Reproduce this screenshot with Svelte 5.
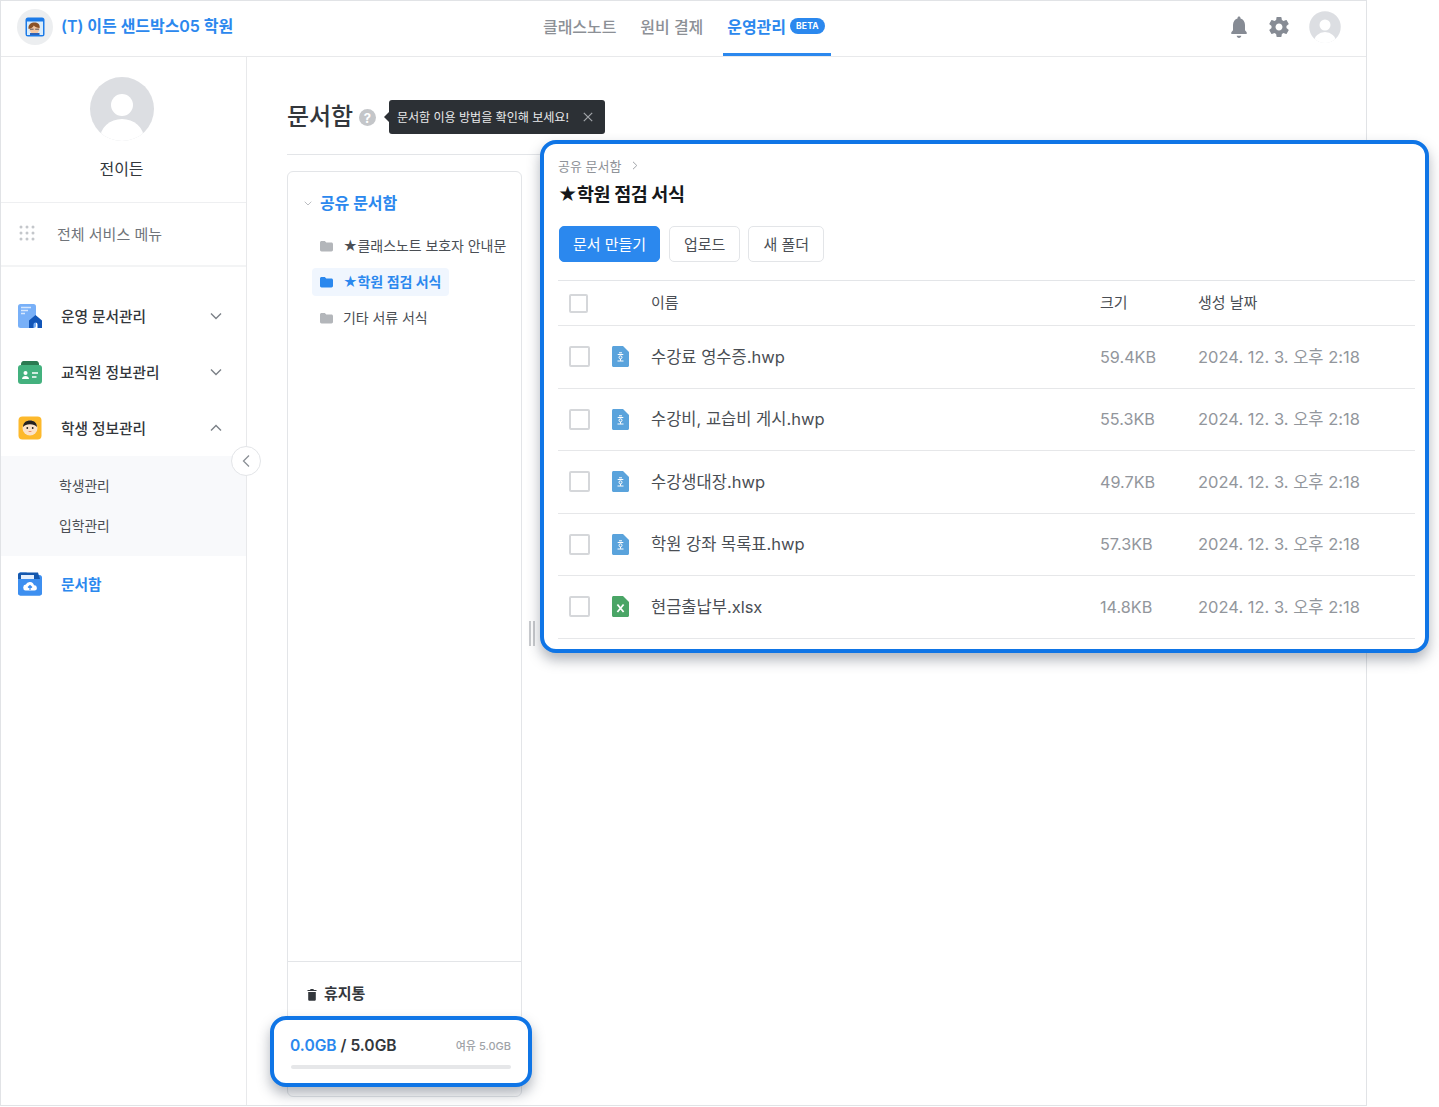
<script>
  const files = [
    { name: '수강료 영수증.hwp', size: '59.4KB', kind: 'hwp' },
    { name: '수강비, 교습비 게시.hwp', size: '55.3KB', kind: 'hwp' },
    { name: '수강생대장.hwp', size: '49.7KB', kind: 'hwp' },
    { name: '학원 강좌 목록표.hwp', size: '57.3KB', kind: 'hwp' },
    { name: '현금출납부.xlsx', size: '14.8KB', kind: 'xls' }
  ];
  const folders = [
    { name: '★클래스노트 보호자 안내문', on: false },
    { name: '★학원 점검 서식', on: true },
    { name: '기타 서류 서식', on: false }
  ];
  const folderPath = 'M1 2.6C1 1.7 1.7 1 2.6 1h3.2l1.5 1.6h5.1c.9 0 1.6.7 1.6 1.6v5.6c0 .9-.7 1.6-1.6 1.6H2.6C1.7 11.4 1 10.7 1 9.8z';
</script>

<div class="frame">
  <header class="top">
    <div class="brand">
      <span class="logo">
        <svg viewBox="0 0 20 20" width="20" height="20">
          <rect x="0.5" y="0.5" width="19" height="19" rx="2.500" fill="#1b7ae8"/>
          <rect x="2" y="4.500" width="16" height="13.500" fill="#d9ecfb"/>
          <circle cx="9.500" cy="11.500" r="5.200" fill="#f3c7a3"/>
          <path d="M3.600 12c-.8-4.500 2.800-6.400 5.800-6.400 3.200 0 5.800 1.800 5.200 5.400-2.400-.2-4.800-.8-5.800-2.400-.6 1.600-2.800 3-5.200 3.400z" fill="#8a5228"/>
          <path d="M5 12.200h3.600M10.200 12.200h3.800" stroke="#4a4a52" stroke-width=".9"/>
          <rect x="5" y="16" width="9.500" height="2" fill="#2e62b8"/>
        </svg>
      </span>
      <span class="brand-name">(T) 이든 샌드박스05 학원</span>
    </div>
    <nav class="nav">
      <a>클래스노트</a>
      <a>원비 결제</a>
      <a class="on">운영관리<b>BETA</b></a>
    </nav>
    <div class="tools">
      <svg class="bell" viewBox="0 0 24 24" width="24" height="24"><path fill="#868b94" d="M12 23c1.3 0 2.3-1 2.3-2.2H9.700C9.700 22 10.700 23 12 23zm7.700-5.800-1.700-2V10c0-3.300-1.900-5.800-4.500-6.500V3c0-.9-.7-1.600-1.500-1.600S10.500 2.100 10.500 3v.5C7.900 4.200 6 6.700 6 10v5.200l-1.700 2V19h15.400z"/></svg>
      <svg class="gear" viewBox="0 0 24 24" width="24" height="24"><path fill="#868b94" d="M19.430 12.980c.04-.32.07-.64.07-.98s-.03-.66-.07-.98l2.110-1.650c.19-.15.24-.42.12-.64l-2-3.460c-.12-.22-.39-.3-.61-.22l-2.490 1c-.52-.4-1.080-.73-1.690-.98l-.38-2.650A.488.488 0 0 0 14 2h-4c-.25 0-.46.18-.49.420l-.38 2.650c-.61.25-1.170.59-1.690.98l-2.490-1c-.23-.09-.49 0-.61.22l-2 3.460c-.13.22-.07.490.12.640l2.110 1.650c-.04.32-.07.650-.07.980s.03.660.07.980l-2.110 1.650c-.19.150-.24.420-.12.640l2 3.460c.12.220.39.300.61.220l2.490-1c.52.400 1.080.730 1.690.980l.38 2.650c.03.240.24.420.49.420h4c.25 0 .46-.18.49-.42l.38-2.650c.61-.25 1.170-.59 1.690-.98l2.490 1c.23.090.49 0 .61-.22l2-3.460c.12-.22.07-.49-.12-.64zM12 15.500c-1.930 0-3.500-1.570-3.500-3.500s1.570-3.500 3.500-3.500 3.500 1.570 3.500 3.500-1.570 3.500-3.500 3.500z"/></svg>
      <svg class="me" viewBox="0 0 64 64" width="32" height="32"><defs><clipPath id="ca"><circle cx="32" cy="32" r="32"/></clipPath></defs><circle cx="32" cy="32" r="31.500" fill="#dcdee2"/><g clip-path="url(#ca)"><circle cx="32" cy="28" r="11" fill="#fff"/><ellipse cx="32" cy="62" rx="22" ry="20" fill="#fff"/></g></svg>
    </div>
  </header>

  <div class="body">
    <aside class="side">
      <div class="profile">
        <svg viewBox="0 0 64 64" width="64" height="64"><defs><clipPath id="cb"><circle cx="32" cy="32" r="32"/></clipPath></defs><circle cx="32" cy="32" r="32" fill="#dcdee2"/><g clip-path="url(#cb)"><circle cx="32" cy="28" r="11" fill="#fff"/><ellipse cx="32" cy="62" rx="22" ry="20" fill="#fff"/></g></svg>
        <span>전이든</span>
      </div>
      <div class="all">
        <svg viewBox="0 0 16 16" width="16" height="16" fill="#c4c7cb">
          {#each [2, 8, 14] as y}{#each [2, 8, 14] as x}<circle cx={x} cy={y} r="1.500"/>{/each}{/each}
        </svg>
        <span>전체 서비스 메뉴</span>
      </div>
      <ul class="menu">
        <li class="item">
          <svg viewBox="0 0 24 24" width="24" height="24"><rect x="0" y="0" width="18" height="24" rx="2.500" fill="#78b0f8"/><path d="M3 3.500h10M3 6.500h7M3 9.500h4" stroke="#d6e7fd" stroke-width="1.400"/><path d="M11 24v-7.500L17.500 11l6.500 5.500V24h-4.500v-3.500a2 2 0 0 0-4 0V24z" fill="#1256b8"/></svg>
          <span>운영 문서관리</span>
          <svg class="chev" viewBox="0 0 12 8" width="12" height="8"><path d="M1 1.500l5 5 5-5" fill="none" stroke="#7b8087" stroke-width="1.400"/></svg>
        </li>
        <li class="item">
          <svg viewBox="0 0 24 24" width="24" height="24"><path d="M3 4c0-1.500 1-3 2.500-3h13C20 1 21 2.500 21 4v4H3z" fill="#2b7a51"/><rect y="5" width="24" height="19" rx="3" fill="#43b17e"/><circle cx="7.500" cy="13" r="2" fill="#fff"/><path d="M4 19c0-4 7-4 7 0z" fill="#fff"/><path d="M14 13h6M14 17h4.500" stroke="#fff" stroke-width="1.500"/></svg>
          <span>교직원 정보관리</span>
          <svg class="chev" viewBox="0 0 12 8" width="12" height="8"><path d="M1 1.500l5 5 5-5" fill="none" stroke="#7b8087" stroke-width="1.400"/></svg>
        </li>
        <li class="item">
          <svg viewBox="0 0 24 24" width="24" height="24"><rect x="0.500" y="0.500" width="23" height="23" rx="4" fill="#fdb92c"/><circle cx="12" cy="12" r="7.500" fill="#fbe3cb"/><path d="M5 11C5 6.500 8.500 4.500 12 4.500s7 2 7 6.500c-2-1.800-3.500-2.800-7-2.800s-5 1-7 2.800z" fill="#25211f"/><circle cx="9.300" cy="12" r=".9" fill="#25211f"/><circle cx="14.700" cy="12" r=".9" fill="#25211f"/><path d="M10 15q2 1.600 4 0z" fill="#e2583e"/></svg>
          <span>학생 정보관리</span>
          <svg class="chev" viewBox="0 0 12 8" width="12" height="8"><path d="M1 6.500l5-5 5 5" fill="none" stroke="#7b8087" stroke-width="1.400"/></svg>
        </li>
        <li class="sub">
          <span>학생관리</span>
          <span>입학관리</span>
        </li>
        <li class="item active">
          <svg viewBox="0 0 24 24" width="24" height="24"><path d="M0 3C0 1.500 1 .5 2.500 .5h6L11 3h10.500C23 3 24 4 24 5.500V21c0 1.500-1 2.500-2.500 2.500h-19C1 23.500 0 22.500 0 21z" fill="#3d8ff0"/><path d="M0 3C0 1.500 1 .5 2.500 .5H20L22 7H0z" fill="#1558ae"/><rect x="3" y="3" width="13" height="4.500" fill="#e4effd"/><path d="M0 7h24v14c0 1.500-1 2.500-2.500 2.500h-19C1 23.500 0 22.500 0 21z" fill="#3d8ff0"/><path d="M7.500 18.500a3 3 0 0 1 .3-5.900 4.300 4.300 0 0 1 8.200.700 2.600 2.600 0 0 1 .5 5.200z" fill="#fff"/><path d="M12 18v-4M10 15.500l2-2 2 2" stroke="#3d8ff0" stroke-width="1.200" fill="none"/></svg>
          <span>문서함</span>
        </li>
      </ul>
      <button class="collapse" aria-label="접기">
        <svg viewBox="0 0 8 14" width="8" height="14"><path d="M7 1.500L1.500 7 7 12.500" fill="none" stroke="#8b9096" stroke-width="1.300"/></svg>
      </button>
    </aside>

    <main class="main">
      <div class="heading">
        <h1>문서함</h1>
        <span class="help">?</span>
        <div class="tip">
          <span>문서함 이용 방법을 확인해 보세요!</span>
          <svg viewBox="0 0 10 10" width="10" height="10"><path d="M.8.800l8.400 8.400M9.200.800L.8 9.200" stroke="#a3a6aa" stroke-width="1.200"/></svg>
        </div>
      </div>

      <div class="tree-panel">
        <div class="tree">
          <div class="root">
            <svg viewBox="0 0 8 5" width="8" height="5"><path d="M.7.700L4 4l3.300-3.300" fill="none" stroke="#b4b7bb" stroke-width=".9"/></svg>
            <span>공유 문서함</span>
          </div>
          {#each folders as f}
            <div class="folder" class:on={f.on}>
              <span class="f-in">
                <svg viewBox="1 0 14 12" width="14" height="12"><path d={folderPath} fill={f.on ? '#2b88ee' : '#b3b6ba'}/></svg>
                <span>{f.name}</span>
              </span>
            </div>
          {/each}
        </div>
        <div class="trash">
          <svg viewBox="0 0 10 13" width="10" height="13"><path d="M.5 3h9v-1H7L6.300 1H3.700L3 2H.5zM1.200 4h7.600v7.500c0 .8-.6 1.300-1.300 1.300h-5c-.7 0-1.300-.5-1.300-1.300z" fill="#33373c"/></svg>
          <span>휴지통</span>
        </div>
      </div>
      <div class="grip"></div>
    </main>
  </div>

  <section class="callout files">
    <div class="crumb"><span>공유 문서함</span><svg viewBox="0 0 6 9" width="6" height="9"><path d="M1 .8l3.800 3.700L1 8.200" fill="none" stroke="#a0a3a8" stroke-width="1"/></svg></div>
    <h2>★학원 점검 서식</h2>
    <div class="btns">
      <button class="btn primary">문서 만들기</button>
      <button class="btn">업로드</button>
      <button class="btn">새 폴더</button>
    </div>
    <div class="thead row-grid">
      <span class="check small"></span>
      <span class="c-name">이름</span>
      <span class="c-size">크기</span>
      <span class="c-date">생성 날짜</span>
    </div>
    {#each files as file}
      <div class="trow row-grid">
        <span class="check"></span>
        <svg class="ficon" viewBox="0 0 17 21" width="17" height="21">
          <path d="M1.500 0H11l6 6v13.500c0 .8-.7 1.500-1.500 1.500h-14C.7 21 0 20.300 0 19.500v-18C0 .7.7 0 1.500 0z" fill={file.kind === 'hwp' ? '#5aa3dc' : '#4aa566'}/>
          {#if file.kind === 'hwp'}
            <path d="M7 6.800h3M5.700 8.500h5.600M8.500 13v1.800M5.500 15h6" stroke="#fff" stroke-width="1" fill="none"/>
            <circle cx="8.500" cy="11.300" r="1.500" fill="none" stroke="#fff" stroke-width="1"/>
          {:else}
            <path d="M5.400 8.500l6.200 7.500M11.600 8.500L5.400 16" stroke="#fff" stroke-width="1.800"/>
          {/if}
        </svg>
        <span class="c-name name">{file.name}</span>
        <span class="c-size size">{file.size}</span>
        <span class="c-date date">2024. 12. 3. 오후 2:18</span>
      </div>
    {/each}
  </section>

  <section class="callout storage">
    <div class="usage">
      <span class="amount"><em>0.0GB</em> / 5.0GB</span>
      <span class="free">여유 5.0GB</span>
    </div>
    <div class="bar"></div>
  </section>
</div>

<style>
  :global(body) {
    margin: 0;
    background: #fff;
    font-family: Inter, "Noto Sans CJK KR", "Noto Sans", sans-serif;
    color: #33373c;
  }
  .frame {
    position: relative;
    box-sizing: border-box;
    width: 1367px;
    height: 1106px;
    border: 1px solid #e1e3e6;
    background: #fff;
    display: flex;
    flex-direction: column;
  }
  .top {
    box-sizing: border-box;
    height: 56px;
    flex: none;
    border-bottom: 1px solid #e8e9eb;
    padding-bottom: 4px;
    display: grid;
    grid-template-columns: 1fr auto 1fr;
    align-items: center;
    position: relative;
  }
  .brand { display: flex; align-items: center; padding-left: 16px; gap: 8px; }
  .logo {
    width: 36px; height: 36px; border-radius: 50%;
    background: #eceef0;
    display: flex; align-items: center; justify-content: center;
  }
  .brand-name { color: #2b88ee; font-size: 16px; font-weight: 600; letter-spacing: -0.05px; padding-bottom: 4px; }
  .nav { position: absolute; left: 542px; top: 0; bottom: 0; display: flex; gap: 24px; height: 55px; }
  .nav a {
    font-size: 16px; font-weight: 500; color: #8c9096; letter-spacing: -0.05px;
    display: flex; align-items: center; height: 49px;
  }
  .nav a.on {
    color: #2b88ee; position: relative; font-weight: 600;
  }
  .nav a.on::after {
    content: ""; position: absolute; left: -4px; right: -6px; top: 52px; height: 3px; background: #2b88ee;
  }
  .nav b {
    margin-left: 4px; width: 35px; height: 16px; border-radius: 8px; background: #2b88ee; color: #fff;
    font-size: 8.500px; font-weight: 700; letter-spacing: 0.2px;
    display: flex; align-items: center; justify-content: center;
  }
  .tools {
    grid-column: 3; justify-self: end; display: flex; align-items: center; padding-right: 25px;
  }
  .gear { margin-left: 16px; }
  .me { margin-left: 18px; }

  .body { flex: 1; display: flex; min-height: 0; }
  .side {
    position: relative; box-sizing: border-box; flex: none; width: 246px;
    border-right: 1px solid #e8e9eb;
  }
  .profile {
    box-sizing: border-box; height: 146px; padding: 20px 4px 0 0;
    border-bottom: 1px solid #eeeff1;
    display: flex; flex-direction: column; align-items: center; gap: 16px;
  }
  .profile span { font-size: 16px; line-height: 24px; color: #33373c; }
  .all {
    box-sizing: border-box; height: 64px; padding: 0 0 2px 18px;
    border-bottom: 2px solid #f3f4f5;
    display: flex; align-items: center; gap: 22px;
    font-size: 15px; color: #70747a;
  }
  .menu { list-style: none; margin: 0; padding: 21px 0 0; }
  .item {
    height: 56px; display: flex; align-items: center; padding: 0 24px 0 17px;
    font-size: 14.700px; font-weight: 500; color: #33373c;
  }
  .item span { margin-left: 19px; flex: 1; padding-bottom: 2px; }
  .item.active { color: #2b88ee; font-weight: 600; }
  .sub {
    height: 100px; background: #f8f9fb; box-sizing: border-box; padding: 10px 0 10px 58px;
    display: flex; flex-direction: column; font-size: 13.800px; color: #4a4e54;
  }
  .sub span { height: 40px; line-height: 40px; }
  .collapse {
    position: absolute; left: 230px; top: 389px; width: 30px; height: 30px; border-radius: 50%;
    border: 1px solid #e3e5e8; background: #fff; padding: 0;
    display: flex; align-items: center; justify-content: center;
  }

  .main { flex: 1; padding: 0 40px 0 40px; position: relative; display: flex; flex-direction: column; min-width: 0; }
  .heading {
    box-sizing: border-box; height: 98px; flex: none; border-bottom: 1px solid #e3e5e8;
    display: flex; align-items: flex-start; padding-top: 43px;
  }
  h1 { margin: 0; font-size: 24px; line-height: 34px; font-weight: 500; color: #33373c; letter-spacing: -0.1px; }
  .help {
    width: 17px; height: 17px; border-radius: 50%; background: #c4c6c9; color: #fff; margin: 9px 0 0 6px;
    font-size: 13px; font-weight: 700; display: flex; align-items: center; justify-content: center;
  }
  .tip {
    position: relative; box-sizing: border-box; margin: 0 0 0 13px; width: 216px; height: 34px; background: #2c3035; border-radius: 3px;
    display: flex; align-items: center; justify-content: space-between; padding: 0 12px 0 8px;
    font-size: 12.100px; color: #e9eaeb; letter-spacing: -0.05px;
  }
  .tip span { padding-bottom: 2px; white-space: nowrap; }
  .tip::before {
    content: ""; position: absolute; left: -5px; top: 12px;
    border: 5px solid transparent; border-left: 0; border-right-color: #2c3035;
  }
  .tree-panel {
    box-sizing: border-box; width: 235px; height: 926px; margin-top: 16px;
    border: 1px solid #e3e5e8; border-radius: 6px;
    display: flex; flex-direction: column;
  }
  .tree { flex: 1; padding: 18px 0 0 16px; }
  .root { display: flex; align-items: center; height: 26px; gap: 8px; margin-left: 0; }
  .root span { font-size: 16px; font-weight: 600; color: #2b88ee; letter-spacing: -0.1px; padding-bottom: 2px; }
  .folder { height: 36px; display: flex; align-items: center; margin-left: 8px; }
  .root + .folder { margin-top: 12px; }
  .f-in {
    display: inline-flex; align-items: center; gap: 9px; height: 28px; padding: 0 8px; border-radius: 4px;
    font-size: 14px; color: #4a4e54; white-space: nowrap; letter-spacing: -0.07px;
  }
  .f-in span { padding-bottom: 3px; }
  .folder.on .f-in { background: #f0f6fe; color: #2b88ee; font-weight: 600; }
  .trash {
    box-sizing: border-box; height: 135px; flex: none; border-top: 1px solid #e3e5e8;
    padding: 22px 0 0 19px; display: flex; align-items: flex-start; gap: 7px;
    font-size: 15px; font-weight: 600; color: #33373c; line-height: 20px;
  }
  .trash svg { margin-top: 4px; }
  .grip {
    position: absolute; left: 282px; top: 564px; width: 2px; height: 25px;
    border-left: 2px solid #c9cbce; border-right: 2px solid #c9cbce;
    box-sizing: content-box;
  }

  .callout {
    position: absolute; box-sizing: border-box; background: #fff;
    border: 4px solid #0f75e6; border-radius: 16px;
    box-shadow: 0 7px 13px rgba(40, 50, 70, 0.36);
  }
  .files { left: 539px; top: 139px; width: 889px; height: 513px; padding: 11px 10px 0 14px; }
  .crumb { display: flex; align-items: center; gap: 8px; height: 20px; font-size: 13px; color: #8f9399; }
  .crumb svg { margin: 1px 0 0 3px; }
  h2 { margin: 5px 0 0 0; font-size: 18.500px; line-height: 28px; font-weight: 700; color: #16181b; letter-spacing: -0.4px; }
  .btns { display: flex; gap: 8px; margin: 18px 0 0 1px; }
  .btn {
    box-sizing: border-box; height: 36px; padding: 0 14px 2px; border: 1px solid #e3e5e8; border-radius: 5px; background: #fff;
    font: inherit; font-size: 15px; color: #4a4e54; white-space: nowrap;
  }
  .btn.primary { background: #2b88ee; border-color: #2b88ee; color: #fff; width: 101px; margin-right: 1px; padding: 0 0 2px; }
  .row-grid {
    display: grid; grid-template-columns: 54px 39px 449px 98px 1fr;
    align-items: center; box-sizing: border-box; border-bottom: 1px solid #e6e7e9;
  }
  .thead { margin-top: 18px; height: 46px; border-top: 1px solid #e3e5e8; font-size: 15px; color: #4a4e54; }
  .thead span:not(.check) { padding-bottom: 3px; }
  .trow { height: 62.500px; }
  .check {
    box-sizing: border-box; width: 21px; height: 21px; margin-left: 11px; border: 2px solid #d5d7da; border-radius: 2px; background: #fff;
    grid-column: 1;
  }
  .check.small { width: 19px; height: 19px; }
  .ficon { grid-column: 2; }
  .c-name { grid-column: 3; }
  .c-size { grid-column: 4; }
  .c-date { grid-column: 5; }
  .name { font-size: 16.500px; color: #4a4e54; padding-bottom: 2px; }
  .size { font-size: 16.200px; color: #92969c; white-space: nowrap; }
  .date { font-size: 16.500px; color: #92969c; white-space: nowrap; padding-bottom: 2px; }

  .storage { left: 269px; top: 1015px; width: 262px; height: 71px; padding: 14px 17px 0 16px; }
  .usage { display: flex; align-items: center; justify-content: space-between; height: 22px; }
  .amount { font-size: 15.600px; font-weight: 600; color: #33373c; }
  .amount em { font-style: normal; color: #2b88ee; }
  .free { font-size: 11px; font-weight: 500; color: #a0a3a8; }
  .bar { height: 4px; background: #e6e7e9; border-radius: 2px; margin-top: 9px; margin-left: 1px; }
</style>
